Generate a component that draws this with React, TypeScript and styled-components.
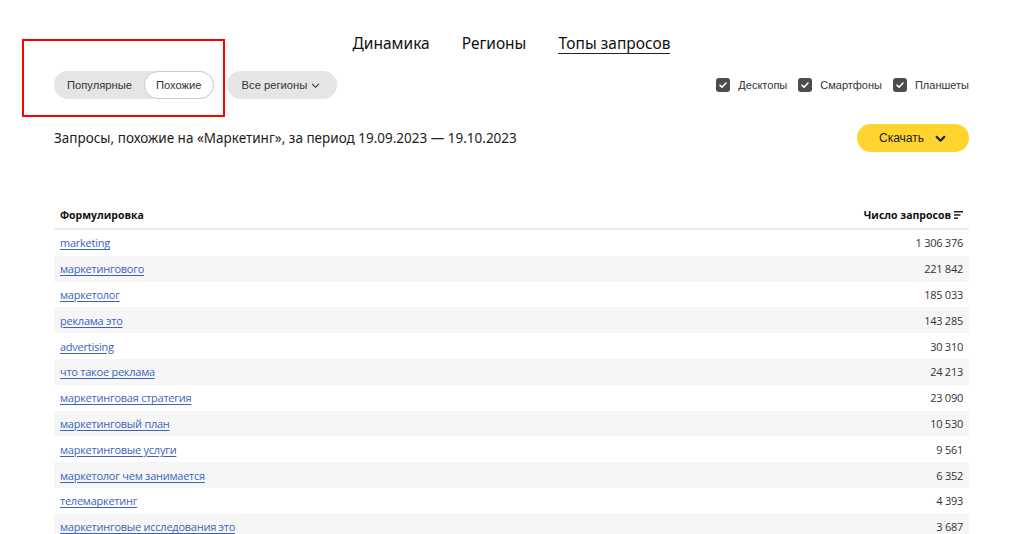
import styled, { createGlobalStyle } from 'styled-components';

type Row = {
  phrase: string;
  count: string;
};

const ROWS: Row[] = [
  { phrase: 'marketing', count: '1 306 376' },
  { phrase: 'маркетингового', count: '221 842' },
  { phrase: 'маркетолог', count: '185 033' },
  { phrase: 'реклама это', count: '143 285' },
  { phrase: 'advertising', count: '30 310' },
  { phrase: 'что такое реклама', count: '24 213' },
  { phrase: 'маркетинговая стратегия', count: '23 090' },
  { phrase: 'маркетинговый план', count: '10 530' },
  { phrase: 'маркетинговые услуги', count: '9 561' },
  { phrase: 'маркетолог чем занимается', count: '6 352' },
  { phrase: 'телемаркетинг', count: '4 393' },
  { phrase: 'маркетинговые исследования это', count: '3 687' },
];

const DEVICES = ['Десктопы', 'Смартфоны', 'Планшеты'];

const GlobalStyle = createGlobalStyle`
  body {
    margin: 0;
    background: #fff;
    font-family: "Open Sans", "Noto Sans", sans-serif;
    color: #222;
  }
`;

const Page = styled.div`
  position: relative;
  padding: 0 55px 0 54px;
  height: 534px;
  overflow: hidden;
`;

const Highlight = styled.div`
  position: absolute;
  left: 22px;
  top: 39px;
  width: 199px;
  height: 74px;
  border: 2px solid #f00;
  pointer-events: none;
`;

const Tabs = styled.nav`
  display: flex;
  justify-content: center;
  gap: 32px;
  padding-top: 33px;
  height: 38px;
  box-sizing: border-box;
`;

const Tab = styled.span<{ $active?: boolean }>`
  font-family: "Noto Sans", "Open Sans", sans-serif;
  font-size: 15.5px;
  line-height: 20px;
  color: #111;
  height: 20px;
  border-bottom: 1px solid ${(p) => (p.$active ? '#222' : 'transparent')};
`;

const Toolbar = styled.div`
  display: flex;
  align-items: center;
  justify-content: space-between;
  margin-top: 33px;
  height: 28px;
`;

const FilterGroup = styled.div`
  display: flex;
  gap: 13px;
`;

const Segment = styled.div`
  display: flex;
  background: #e5e5e5;
  border-radius: 14px;
  height: 28px;
`;

const SegmentItem = styled.span<{ $selected?: boolean }>`
  display: flex;
  align-items: center;
  padding: 0 ${(p) => (p.$selected ? '11px' : '11px 0 12px')};
  font-family: "Liberation Sans", Arial, sans-serif;
  font-size: 11.2px;
  color: #333;
  border-radius: 14px;
  background: ${(p) => (p.$selected ? '#fff' : 'transparent')};
  border: 1px solid ${(p) => (p.$selected ? '#ccc' : 'transparent')};
`;

const RegionButton = styled.span`
  display: flex;
  align-items: center;
  gap: 3px;
  height: 28px;
  padding: 0 16px 0 15px;
  border-radius: 14px;
  background: #e5e5e5;
  font-family: "Liberation Sans", Arial, sans-serif;
  font-size: 11.2px;
  color: #333;
`;

const Devices = styled.div`
  display: flex;
  gap: 11px;
`;

const Device = styled.label`
  display: flex;
  align-items: center;
  gap: 8px;
  font-family: "Liberation Sans", Arial, sans-serif;
  font-size: 11px;
  color: #333;
`;

const Box = styled.span`
  display: flex;
  align-items: center;
  justify-content: center;
  width: 14px;
  height: 14px;
  border-radius: 3px;
  background: #4d4d4d;
`;

const Heading = styled.div`
  display: flex;
  align-items: center;
  justify-content: space-between;
  margin-top: 25px;
  height: 28px;
`;

const Title = styled.h1`
  margin: 0;
  font-family: "Noto Sans", "Open Sans", sans-serif;
  font-size: 13.5px;
  font-weight: 400;
  color: #222;
`;

const DownloadButton = styled.button`
  display: flex;
  align-items: center;
  gap: 10px;
  height: 28px;
  width: 112px;
  justify-content: center;
  padding: 0;
  border: none;
  border-radius: 14px;
  background: #ffd42f;
  font-family: "Liberation Sans", Arial, sans-serif;
  font-size: 12px;
  color: #222;
`;

const Table = styled.div`
  margin-top: 50px;
`;

const HeaderRow = styled.div`
  display: flex;
  justify-content: space-between;
  align-items: center;
  height: 26px;
  padding: 0 6px 0 6px;
  border-bottom: 2px solid #ececec;
  font-family: "Open Sans", sans-serif;
  font-size: 10.5px;
  font-weight: 700;
  color: #111;
`;

const SortLabel = styled.span`
  display: flex;
  align-items: center;
  gap: 3px;
`;

const DataRow = styled.div<{ $striped: boolean }>`
  display: flex;
  justify-content: space-between;
  align-items: center;
  height: 25.8px;
  padding: 0 6px 0 6px;
  background: ${(p) => (p.$striped ? '#f6f6f6' : '#fff')};
  font-family: "Open Sans", sans-serif;
  font-size: 11px;
  letter-spacing: -0.25px;
`;

const PhraseLink = styled.a`
  color: #3b64c0;
  text-decoration: underline;
  text-underline-offset: 2px;
`;

const Count = styled.span`
  color: #333;
`;

const Check = () => (
  <svg width="10" height="10" viewBox="0 0 10 10">
    <path d="M2 5.2l2 2 4-4.2" fill="none" stroke="#fff" strokeWidth="1.6" strokeLinecap="round" strokeLinejoin="round" />
  </svg>
);

const Chevron = ({ size, weight, color }: { size: number; weight: number; color: string }) => (
  <svg width={size} height={size} viewBox="0 0 12 12">
    <path d="M2.5 4.5L6 8l3.5-3.5" fill="none" stroke={color} strokeWidth={weight} strokeLinecap="round" strokeLinejoin="round" />
  </svg>
);

const SortIcon = () => (
  <svg width="9" height="8" viewBox="0 0 9 8">
    <rect x="0" y="0" width="9" height="1.5" fill="#222" />
    <rect x="0" y="3.2" width="6.5" height="1.5" fill="#222" />
    <rect x="0" y="6.4" width="4" height="1.5" fill="#222" />
  </svg>
);

const App = () => (
  <>
    <GlobalStyle />
    <Page>
      <Highlight />
      <Tabs>
        <Tab>Динамика</Tab>
        <Tab>Регионы</Tab>
        <Tab $active>Топы запросов</Tab>
      </Tabs>
      <Toolbar>
        <FilterGroup>
          <Segment>
            <SegmentItem>Популярные</SegmentItem>
            <SegmentItem $selected>Похожие</SegmentItem>
          </Segment>
          <RegionButton>
            Все регионы
            <Chevron size={11} weight={1.1} color="#333" />
          </RegionButton>
        </FilterGroup>
        <Devices>
          {DEVICES.map((device) => (
            <Device key={device}>
              <Box>
                <Check />
              </Box>
              {device}
            </Device>
          ))}
        </Devices>
      </Toolbar>
      <Heading>
        <Title>Запросы, похожие на «Маркетинг», за период 19.09.2023 — 19.10.2023</Title>
        <DownloadButton>
          Скачать
          <Chevron size={13} weight={2} color="#222" />
        </DownloadButton>
      </Heading>
      <Table>
        <HeaderRow>
          <span>Формулировка</span>
          <SortLabel>
            Число запросов
            <SortIcon />
          </SortLabel>
        </HeaderRow>
        {ROWS.map((row, i) => (
          <DataRow key={row.phrase} $striped={i % 2 === 1}>
            <PhraseLink href="#">{row.phrase}</PhraseLink>
            <Count>{row.count}</Count>
          </DataRow>
        ))}
      </Table>
    </Page>
  </>
);

export default App;
